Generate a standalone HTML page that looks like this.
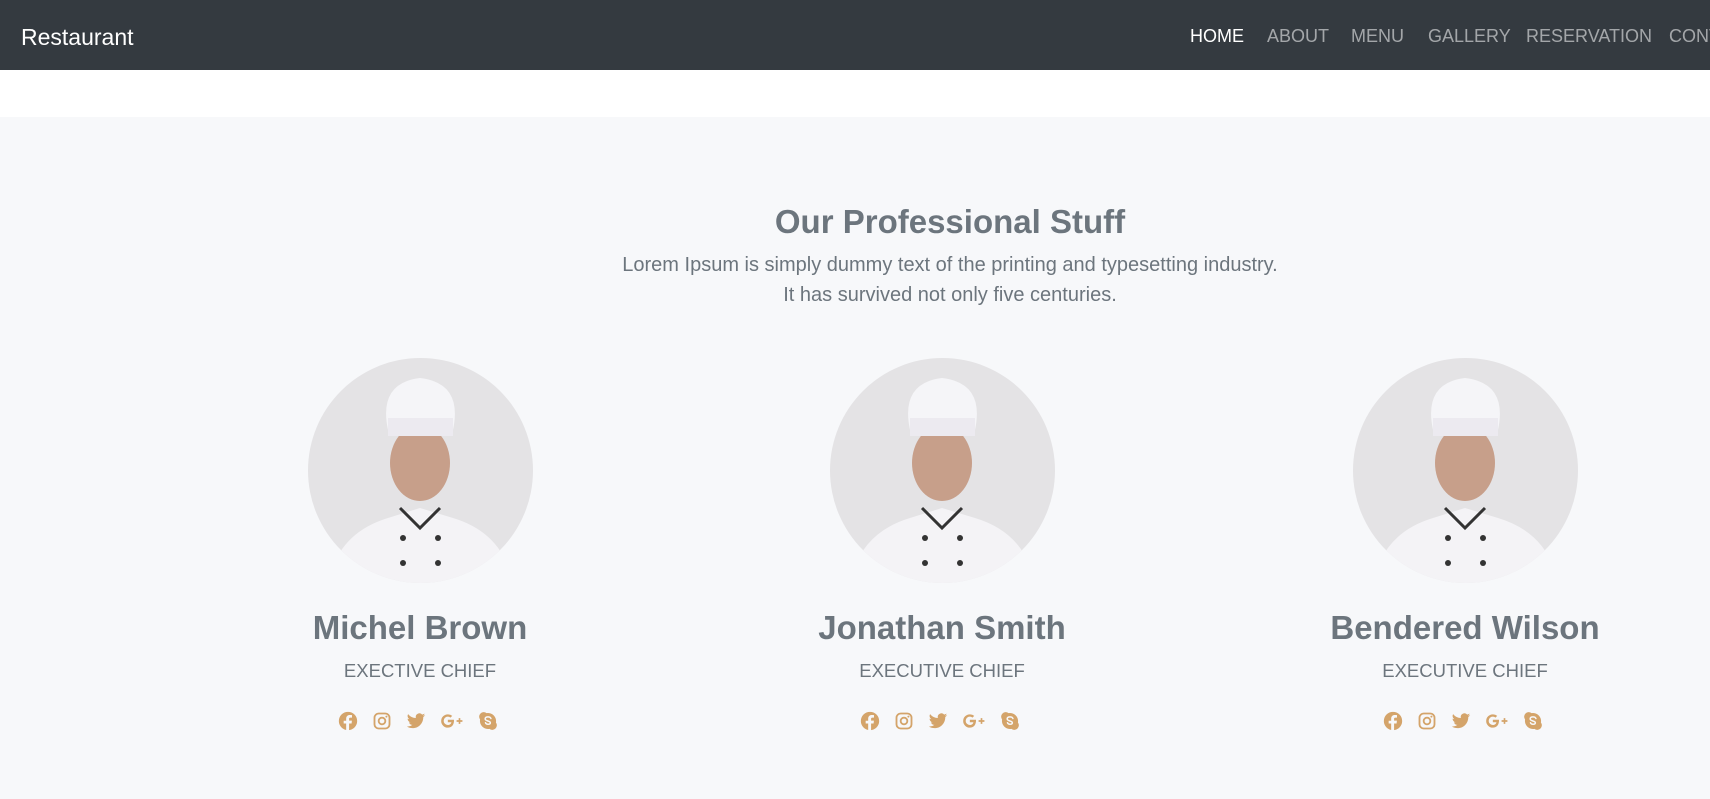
<!DOCTYPE html>
<html><head><meta charset="utf-8"><style>
*{margin:0;padding:0;box-sizing:border-box}
body{width:1710px;height:799px;overflow:hidden;background:#f7f8fa;font-family:"Segoe UI","Liberation Sans",sans-serif;color:#6c757d;position:relative}
.nav{position:absolute;left:0;top:0;width:1710px;height:70px;background:#343a40}
.brand{position:absolute;left:21px;top:24px;font-size:23px;color:#fff}
.nav a{position:absolute;top:26px;font-size:18px;color:rgba(255,255,255,.55);text-decoration:none;white-space:nowrap}
.white{position:absolute;top:70px;left:0;width:1710px;height:47px;background:#fff}
.c{position:absolute;text-align:center;transform:translateX(-50%);white-space:nowrap}
h2{font-size:33px;font-weight:600}
.lead{font-size:20px;line-height:30px}
.name{font-size:33px;font-weight:600}
.role{font-size:18.5px}
.ph{position:absolute;width:225px;height:225px;border-radius:50%;overflow:hidden;top:358px}
.ic{position:absolute;top:711px;display:flex;gap:14px;transform:translateX(-50%)}
.ic svg{width:20px;height:20px}
</style></head><body>
<div class="nav"><div class="brand">Restaurant</div>
<a style="left:1190px;color:#fff">HOME</a><a style="left:1267px">ABOUT</a><a style="left:1351px">MENU</a><a style="left:1428px">GALLERY</a><a style="left:1526px">RESERVATION</a><a style="left:1669px">CONTACT</a></div>
<div class="white"></div>
<div class="c" style="left:950px;top:203px"><h2>Our Professional Stuff</h2></div>
<div class="c lead" style="left:950px;top:250px">Lorem Ipsum is simply dummy text of the printing and typesetting industry.<br>It has survived not only five centuries.</div>

<svg width="0" height="0" style="position:absolute"><defs>
<g id="chef">
<rect width="225" height="225" fill="#e4e3e5"/>
<path d="M20 225 Q30 175 80 160 L112 150 L145 160 Q195 175 205 225Z" fill="#f4f3f6"/>
<path d="M92 150 L112 170 L132 150" fill="none" stroke="#333" stroke-width="3"/>
<ellipse cx="112" cy="105" rx="30" ry="38" fill="#c79f8a"/>
<path d="M80 72 Q70 25 112 20 Q155 25 145 72 Z" fill="#f5f5f8"/>
<rect x="80" y="60" width="65" height="18" fill="#eceaf0"/>
<circle cx="95" cy="180" r="3" fill="#333"/><circle cx="130" cy="180" r="3" fill="#333"/>
<circle cx="95" cy="205" r="3" fill="#333"/><circle cx="130" cy="205" r="3" fill="#333"/>
</g></defs></svg>

<div class="ph" style="left:308px"><svg width="225" height="225"><use href="#chef"/></svg></div>
<div class="ph" style="left:830px"><svg width="225" height="225"><use href="#chef"/></svg></div>
<div class="ph" style="left:1353px"><svg width="225" height="225"><use href="#chef"/></svg></div>

<div class="c name" style="left:420px;top:609px">Michel Brown</div>
<div class="c name" style="left:942px;top:609px">Jonathan Smith</div>
<div class="c name" style="left:1465px;top:609px">Bendered Wilson</div>
<div class="c role" style="left:420px;top:660px">EXECTIVE CHIEF</div>
<div class="c role" style="left:942px;top:660px">EXECUTIVE CHIEF</div>
<div class="c role" style="left:1465px;top:660px">EXECUTIVE CHIEF</div>

<div class="ic" style="left:418px" id="i1"></div>
<div class="ic" style="left:940px" id="i2"></div>
<div class="ic" style="left:1463px" id="i3"></div>
<script>
var s='<svg viewBox="0 0 24 24"><circle cx="12" cy="12" r="11" fill="#d4a46a"/><path d="M13.3 24V15h3l.4-3.4h-3.4V9.5c0-1 .3-1.6 1.7-1.6h1.8V4.9c-.3 0-1.4-.1-2.6-.1-2.6 0-4.4 1.6-4.4 4.5v2.4H6.8V15h3v9z" fill="#f7f8fa"/></svg>'+
'<svg viewBox="0 0 24 24"><rect x="3" y="3" width="18" height="18" rx="5" fill="none" stroke="#d4a46a" stroke-width="2.2"/><circle cx="12" cy="12" r="4" fill="none" stroke="#d4a46a" stroke-width="2.2"/><circle cx="17.3" cy="6.7" r="1.2" fill="#d4a46a"/></svg>'+
'<svg viewBox="0 0 24 24"><path d="M23 5c-.8.4-1.7.6-2.6.7.9-.6 1.6-1.4 2-2.5-.9.5-1.9.9-2.9 1.1A4.5 4.5 0 0 0 11.8 8.4 12.8 12.8 0 0 1 2.5 3.7a4.5 4.5 0 0 0 1.4 6c-.7 0-1.4-.2-2-.6 0 2.2 1.6 4 3.6 4.4-.7.2-1.4.2-2 .1.6 1.8 2.2 3.1 4.2 3.1A9 9 0 0 1 1 18.6 12.8 12.8 0 0 0 7.9 20.6c8.3 0 12.8-6.9 12.8-12.8v-.6C21.6 6.6 22.4 5.9 23 5z" fill="#d4a46a"/></svg>'+
'<svg viewBox="0 0 28 24" style="width:24px"><path d="M9 10.5v3h4.3c-.4 2-2 3.3-4.3 3.3a5 5 0 0 1 0-10c1.2 0 2.3.4 3.1 1.2l2.2-2.2A8 8 0 0 0 9 4a8 8 0 1 0 0 16c4.6 0 7.7-3.3 7.4-9.5z" fill="#d4a46a"/><path d="M22 8.5v2.5h-2.5v2H22v2.5h2V13h2.5v-2H24V8.5z" fill="#d4a46a"/></svg>'+
'<svg viewBox="0 0 24 24"><path d="M21.5 13.8A9.7 9.7 0 0 0 10.2 2.5 5.5 5.5 0 0 0 2.5 10.2a9.7 9.7 0 0 0 11.3 11.3 5.5 5.5 0 0 0 7.7-7.7z" fill="#d4a46a"/><path d="M15.5 9c-.5-1.3-2-2-3.6-2-2 0-3.3 1-3.3 2.5 0 3 6.2 2 6.2 4.6 0 1-1 1.8-2.8 1.8-1.6 0-2.6-.8-3-1.8" fill="none" stroke="#f7f8fa" stroke-width="1.8" stroke-linecap="round"/></svg>';
['i1','i2','i3'].forEach(function(i){document.getElementById(i).innerHTML=s;});
</script>
</body></html>
